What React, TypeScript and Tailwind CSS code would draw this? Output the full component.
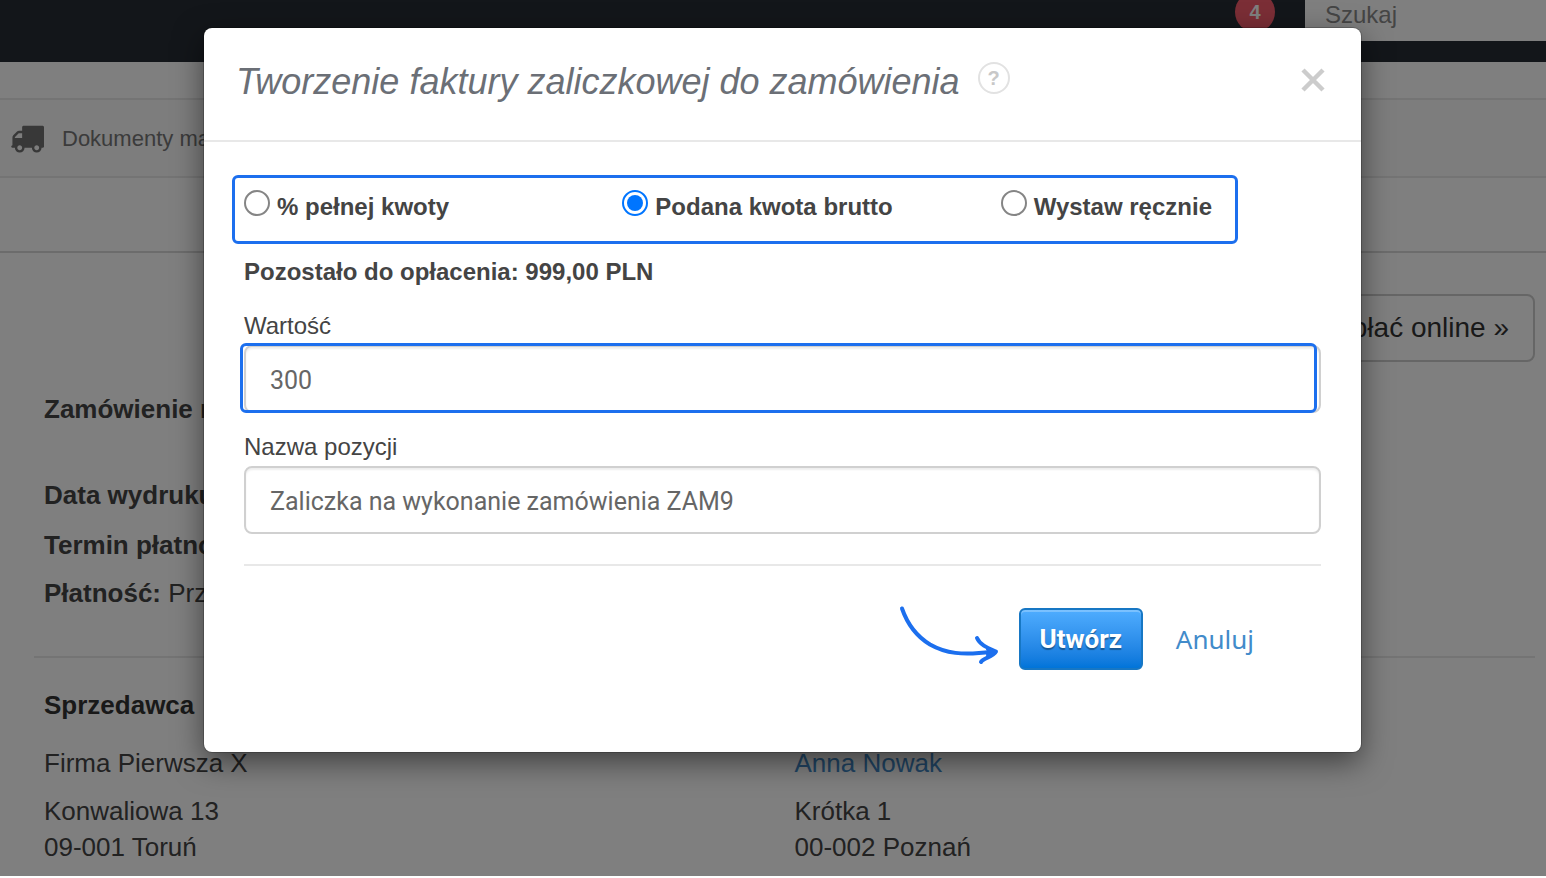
import { useState } from "react";

const modes = [
  { id: "percent", label: "% pełnej kwoty" },
  { id: "gross", label: "Podana kwota brutto" },
  { id: "manual", label: "Wystaw ręcznie" },
];

function TruckIcon() {
  return (
    <svg className="h-[34px] w-[34px] fill-[#707070]" viewBox="0 0 1792 1792" aria-hidden="true">
      <path d="M640 1408q0-52-38-90t-90-38-90 38-38 90 38 90 90 38 90-38 38-90zm-384-512h384v-256h-158q-13 0-22 9l-195 195q-9 9-9 22v30zm1280 512q0-52-38-90t-90-38-90 38-38 90 38 90 90 38 90-38 38-90zm256-1088v1024q0 15-4 26.5t-13.5 18.5-16.5 11.5-23.5 6-22.5 2-25.5 0-22.5-.5q0 106-75 181t-181 75-181-75-75-181h-384q0 106-75 181t-181 75-181-75-75-181h-64q-3 0-22.5.5t-25.5 0-22.5-2-23.5-6-16.5-11.5-13.5-18.5-4-26.5q0-26 19-45t45-19v-320q0-8-.5-35t0-38 2.5-34.5 6.5-37 14-30.5 22.5-30l198-198q19-19 50.5-32t58.5-13h160v-192q0-26 19-45t45-19h1024q26 0 45 19t19 45z" />
    </svg>
  );
}

function HintArrow() {
  return (
    <svg
      className="h-[62px] w-[100px] shrink-0 overflow-visible fill-none stroke-[#1c6fee]"
      viewBox="0 0 100 62"
      strokeWidth="4"
      strokeLinecap="round"
      strokeLinejoin="round"
      aria-hidden="true"
    >
      <path d="M2 0.5C7 15 16 28 30 36.500C45 45 62 48 92 43.500" />
      <path d="M77 30C80 37 88 40 96 43.500C93 49 83 50 81 54" />
      <path d="M88 41L95 44L88 47" />
    </svg>
  );
}

function OrderPage() {
  return (
    <div className="bg-white">
      <header className="flex h-[62px] items-start justify-end bg-[#262d35]">
        <span className="-mt-2 mr-[30px] flex h-10 w-10 items-center justify-center rounded-full bg-[#f75c6c] text-xl font-bold text-white">
          4
        </span>
        <input
          type="text"
          aria-label="Szukaj"
          placeholder="Szukaj"
          className="h-[41px] w-[241px] bg-white px-5 pb-3 text-2xl placeholder:text-[#8a8a8a]"
        />
      </header>

      <div className="h-9" />
      <nav className="flex h-20 items-center border-y-2 border-[#e8e8e8] bg-[#fafafa] pl-[10px]">
        <a href="#dokumenty" className="flex items-center gap-[18px] text-[22px] text-[#777]">
          <TruckIcon />
          Dokumenty magazynowe
        </a>
      </nav>
      <div className="h-[75px] border-b-2 border-[#d8d8d8]" />

      <main className="pr-[11px] pb-[11px] pl-[34px] text-[26px] leading-9 text-[#444]">
        <div className="flex justify-end pt-[41px]">
          <button
            type="button"
            className="h-[68px] rounded-lg border-2 border-[#ccc] px-6 text-[28px] text-[#333]"
          >
            Opłać online »
          </button>
        </div>

        <div className="px-[10px] pt-[29px] pb-[45px]">
          <h1 className="mb-[50px] font-bold">Zamówienie nr ZAM9</h1>
          <p className="mb-[14px]">
            <b>Data wydruku:</b> 2023-03-01
          </p>
          <p className="mb-3">
            <b>Termin płatności:</b> 2023-03-08
          </p>
          <p>
            <b>Płatność:</b> Przelew
          </p>
        </div>

        <div className="grid grid-cols-2 border-t-2 border-[#e8e8e8] pt-[29px]">
          <div className="px-[10px]">
            <h2 className="mb-[22px] font-bold text-[#333]">Sprzedawca</h2>
            <p className="mb-3">Firma Pierwsza X</p>
            <p>Konwaliowa 13</p>
            <p>09-001 Toruń</p>
          </div>
          <div className="px-[10px]">
            <h2 className="mb-[22px] font-bold text-[#333]">Nabywca</h2>
            <p className="mb-3">
              <a href="#nabywca" className="text-[#428bca]">
                Anna Nowak
              </a>
            </p>
            <p>Krótka 1</p>
            <p>00-002 Poznań</p>
          </div>
        </div>
      </main>
    </div>
  );
}

function AdvanceInvoiceModal() {
  const [mode, setMode] = useState("gross");

  return (
    <div
      role="dialog"
      aria-labelledby="modal-title"
      className="rounded-lg bg-white text-2xl leading-[34px] text-[#444] shadow-[0_0_0_1px_rgba(0,0,0,0.2),0_10px_30px_rgba(0,0,0,0.5)]"
    >
      <div className="flex h-[114px] items-center border-b-2 border-[#e8e8e8] pr-[34px] pb-2 pl-8">
        <h3 id="modal-title" className="pt-1 text-4xl text-[#6b6f76] italic">
          Tworzenie faktury zaliczkowej do zamówienia
        </h3>
        <button
          type="button"
          aria-label="Pomoc"
          className="mb-1 ml-[18px] flex h-8 w-8 items-center justify-center rounded-full border-2 border-[#e2e2e2] text-xl font-bold text-[#c8c8c8]"
        >
          ?
        </button>
        <button type="button" aria-label="Zamknij" className="ml-auto">
          <svg className="h-7 w-7 stroke-[#ccc]" viewBox="0 0 28 28" strokeWidth="4.500" aria-hidden="true">
            <path d="M4 4L24 24M24 4L4 24" />
          </svg>
        </button>
      </div>

      <form className="px-10 pt-[33px] pb-[82px]" onSubmit={(e) => e.preventDefault()}>
        <fieldset className="-ml-3 mr-[83px] grid grid-cols-[1fr_1fr_auto] rounded-md border-3 border-[#1c6fee] pt-3 pr-[23px] pb-[17px] pl-[9px]">
          {modes.map((m) => (
            <label key={m.id} className="flex items-start gap-[7px] font-bold">
              <input
                type="radio"
                name="mode"
                checked={mode === m.id}
                onChange={() => setMode(m.id)}
                className="h-[26px] w-[26px] shrink-0 appearance-none rounded-full border-2 border-[#858585] bg-clip-content p-[3px] checked:border-[#0075ff] checked:bg-[#0075ff]"
              />
              {m.label}
            </label>
          ))}
        </fieldset>

        <p className="mt-[11px] font-bold">Pozostało do opłacenia: 999,00 PLN</p>

        <label htmlFor="value" className="mt-5 mb-0.5 block">
          Wartość
        </label>
        <div className="relative">
          <input
            id="value"
            type="text"
            defaultValue="300"
            className="block h-[68px] w-full rounded-lg border-2 border-[#d0d0d0] px-6 pt-0.5 font-['Roboto',sans-serif] text-[25px] text-[#666] shadow-[inset_0_2px_2px_rgba(0,0,0,0.07)]"
          />
          <div className="pointer-events-none absolute -top-0.5 right-1 bottom-0 -left-1 rounded-md border-3 border-[#1c6fee]" />
        </div>

        <label htmlFor="name" className="mt-[17px] mb-0.5 block">
          Nazwa pozycji
        </label>
        <input
          id="name"
          type="text"
          defaultValue="Zaliczka na wykonanie zamówienia ZAM9"
          className="block h-[68px] w-full rounded-lg border-2 border-[#d0d0d0] px-6 pt-0.5 font-['Roboto',sans-serif] text-[25px] text-[#666] shadow-[inset_0_2px_2px_rgba(0,0,0,0.07)]"
        />

        <div className="mt-[30px] flex items-center justify-end border-t-2 border-[#e8e8e8] pt-[42px] pr-[67px]">
          <HintArrow />
          <button
            type="submit"
            className="ml-[19px] h-[62px] w-[124px] rounded-md border-2 border-[#1777c4] bg-linear-to-b from-[#4fadff] to-[#0074d9] font-['Roboto',sans-serif] text-[26px] font-bold text-white shadow-[inset_0_2px_0_rgba(255,255,255,0.25)] text-shadow-[0_2px_1px_rgba(0,0,0,0.35)]"
          >
            Utwórz
          </button>
          <a href="#anuluj" className="ml-[33px] font-['Noto_Sans',sans-serif] text-[26px] text-[#428bca]">
            Anuluj
          </a>
        </div>
      </form>
    </div>
  );
}

export default function App() {
  return (
    <div className="relative overflow-hidden font-['Liberation_Sans',Arial,sans-serif]">
      <OrderPage />
      <div className="absolute inset-0 bg-black/50 pt-7 pr-[185px] pl-[204px]">
        <AdvanceInvoiceModal />
      </div>
    </div>
  );
}
